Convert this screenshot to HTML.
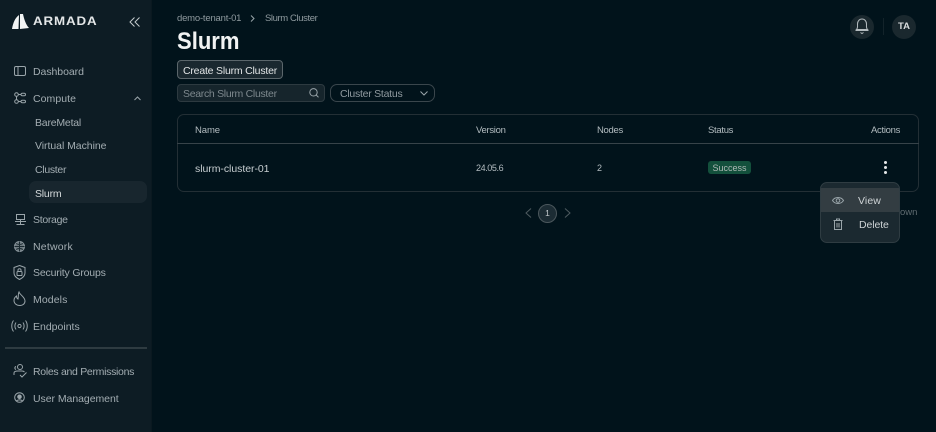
<!DOCTYPE html>
<html><head><meta charset="utf-8"><style>
html,body{margin:0;padding:0;width:936px;height:432px;overflow:hidden;background:#01131b;font-family:"Liberation Sans",sans-serif}
.t{position:absolute;white-space:nowrap;line-height:14px;font-size:10.5px;color:#a3adb2}
svg{position:absolute;fill:none;stroke:#9aa5aa;stroke-width:1;overflow:visible}
.b{position:absolute;box-sizing:border-box}
</style></head><body>
<div class="b" style="left:0;top:0;width:152px;height:432px;background:#0d1c24;border-right:1px solid #0a1920"></div>
<svg style="left:11px;top:13px" width="20" height="18"><path d="M1 16C2 10 4 5 8 2L7.500 16ZM9 1H12C13 6 15 12 18 15L9 16Z" fill="#f2f4f4" stroke="none"/></svg>
<div class="t" style="left:33px;top:15px;font-size:11.500px;font-weight:700;color:#e4e7e8;letter-spacing:.75px;transform:scaleX(1.16);transform-origin:left">ARMADA</div>
<svg style="left:129px;top:17px" width="12" height="10"><path d="M5.500 .5L1 5L5.500 9.500M10.500 .5L6 5L10.500 9.500" stroke="#c4cacc"/></svg>

<svg style="left:14px;top:66px" width="12" height="11"><rect x=".5" y=".5" width="11" height="9" rx="1.500"/><path d="M4 .5V9.500"/></svg>
<div class="t" style="left:33px;top:65px;letter-spacing:-.05px">Dashboard</div>
<svg style="left:14px;top:92px" width="12" height="12"><circle cx="2.500" cy="2.500" r="1.800"/><circle cx="2.500" cy="9.500" r="1.800"/><rect x="7" y="1.200" width="4.500" height="2.600" rx="1.300"/><rect x="7" y="8.200" width="4.500" height="2.600" rx="1.300"/><path d="M4.500 2.500H7M4.500 9.500H7M2.500 4.500V7.500"/></svg>
<div class="t" style="left:33px;top:92px;letter-spacing:.05px">Compute</div>
<svg style="left:134px;top:96px" width="7" height="5"><path d="M.5 4L3.500 1L6.500 4"/></svg>
<div class="t" style="left:35px;top:116px;letter-spacing:-.2px">BareMetal</div>
<div class="t" style="left:35px;top:139px;letter-spacing:-.05px">Virtual Machine</div>
<div class="t" style="left:35px;top:163px;letter-spacing:-.3px">Cluster</div>
<div class="b" style="left:29px;top:181px;width:118px;height:22px;border-radius:7px;background:#18262e"></div>
<div class="t" style="left:35px;top:187px;color:#d5dadc;letter-spacing:-.2px">Slurm</div>
<svg style="left:15px;top:214px" width="11" height="12"><rect x="1.500" y=".5" width="8" height="5"/><path d="M0 7.500H11M1.500 10.500H9.500M5.500 5.500V10.500"/></svg>
<div class="t" style="left:33px;top:213px;letter-spacing:-.3px">Storage</div>
<svg style="left:14px;top:241px" width="11" height="11"><circle cx="5.500" cy="5.500" r="5" fill="#6f7b81" stroke="#87939a"/><path d="M.5 5.500H10.500M5.500 .5V10.500M2 2.500Q5.500 4.500 9 2.500M2 8.500Q5.500 6.500 9 8.500" stroke="#1a2a31"/></svg>
<div class="t" style="left:33px;top:240px;letter-spacing:.2px">Network</div>
<svg style="left:13px;top:265px" width="13" height="15"><path d="M6.500 .5L12 2.500V8C12 11 9.500 13 6.500 14.500C3.500 13 1 11 1 8V2.500Z"/><rect x="4" y="6.500" width="5" height="4" rx=".8"/><path d="M5 6.500V5C5 3.300 8 3.300 8 5V6.500"/></svg>
<div class="t" style="left:33px;top:266px;letter-spacing:-.17px">Security Groups</div>
<svg style="left:13px;top:291px" width="13" height="15"><path d="M6 1C7 4 12 6 12 10C12 13 9.500 14.500 7 14.500C3.500 14.500 1 12.500 1 9.500C1 7.500 2 6 3.500 5C3.500 6.500 4 7.500 5 8C5.500 5.500 5 3 6 1Z"/></svg>
<div class="t" style="left:33px;top:293px;letter-spacing:.1px">Models</div>
<svg style="left:11px;top:320px" width="17" height="12"><circle cx="8.500" cy="6" r="1.600"/><path d="M5 2.500C3.500 4.500 3.500 7.500 5 9.500M12 2.500C13.500 4.500 13.500 7.500 12 9.500M2.500 .5C.2 3.500 .2 8.500 2.500 11.500M14.500 .5C16.800 3.500 16.800 8.500 14.500 11.500"/></svg>
<div class="t" style="left:33px;top:320px;letter-spacing:0">Endpoints</div>
<div class="b" style="left:5px;top:347px;width:142px;height:2px;background:#2e3b41"></div>
<svg style="left:13px;top:364px" width="14" height="14"><circle cx="7" cy="3" r="2.500"/><path d="M3 2.500C1.500 3 1.500 5 3 5.500M1 11V9C1 7.500 3 7 5 7H9C10 7 11 7.500 11.500 8M7 11L9 13L13.500 8.500"/></svg>
<div class="t" style="left:33px;top:365px;letter-spacing:-.3px">Roles and Permissions</div>
<svg style="left:14px;top:392px" width="11" height="11"><circle cx="5.500" cy="5.500" r="4.800"/><circle cx="5.500" cy="4.800" r="1.800" fill="#9aa5aa"/><path d="M2.500 9C3.500 7.500 7.500 7.500 8.500 9"/></svg>
<div class="t" style="left:33px;top:392px;letter-spacing:-.05px">User Management</div>

<div class="t" style="left:177px;top:12px;font-size:9.500px;color:#8f9a9f;letter-spacing:-.2px">demo-tenant-01</div>
<svg style="left:250px;top:15px" width="5" height="7"><path d="M1 .5L4 3.500L1 6.500"/></svg>
<div class="t" style="left:265px;top:12px;font-size:9.500px;color:#8f9a9f;letter-spacing:-.4px">Slurm Cluster</div>
<div class="t" style="left:177px;top:30px;font-size:24.500px;line-height:24px;font-weight:700;color:#f1f3f3;transform:scaleX(.9);transform-origin:left">Slurm</div>
<div class="b" style="left:177px;top:60px;width:106px;height:19px;border:1px solid #5b666b;border-radius:4px;background:#1a282f"></div>
<div class="t" style="left:183px;top:64px;color:#e2e5e6;letter-spacing:-.2px">Create Slurm Cluster</div>
<div class="b" style="left:177px;top:84px;width:148px;height:18px;border:1px solid #2d3a40;border-radius:4px;background:#16252c"></div>
<div class="t" style="left:183px;top:87px;color:#7d888d;letter-spacing:-.3px">Search Slurm Cluster</div>
<svg style="left:309px;top:88px" width="11" height="10"><circle cx="4.500" cy="4.300" r="3.700"/><path d="M7.200 7L9.500 9.300"/></svg>
<div class="b" style="left:330px;top:84px;width:105px;height:18px;border:1px solid #3a464c;border-radius:7px"></div>
<div class="t" style="left:340px;top:87px;color:#8f9a9f;letter-spacing:-.25px">Cluster Status</div>
<svg style="left:420px;top:91px" width="8" height="5"><path d="M.5 .5L4 4L7.500 .5"/></svg>

<div class="b" style="left:850px;top:15px;width:24px;height:24px;border-radius:50%;background:#1a282e"></div>
<svg style="left:855px;top:18px" width="14" height="17"><path d="M1.500 11.500C3 10 2.500 8 2.500 6C2.500 3 4.500 1 7 1C9.500 1 11.500 3 11.500 6C11.500 8 11 10 12.500 11.500ZM.5 12.500H13.500" stroke="#b4bcbf"/><path d="M5.500 14.500L7 15.500L8.500 14.500" stroke="#b4bcbf"/></svg>
<div class="b" style="left:883px;top:18px;width:1px;height:17px;background:#13232a"></div>
<div class="b" style="left:892px;top:15px;width:24px;height:24px;border-radius:50%;background:#1a282e"></div>
<div class="t" style="left:892px;top:20px;width:24px;text-align:center;font-size:9.500px;font-weight:700;color:#d8dcdd">TA</div>

<div class="b" style="left:177px;top:114px;width:742px;height:78px;border:1px solid #232f35;border-radius:7px"></div>
<div class="b" style="left:177px;top:143px;width:742px;height:1px;background:#374349"></div>
<div class="t" style="left:195px;top:124px;font-size:9.500px;color:#b3bcc0;letter-spacing:-.1px">Name</div>
<div class="t" style="left:476px;top:124px;font-size:9.500px;color:#b3bcc0;letter-spacing:-.3px">Version</div>
<div class="t" style="left:597px;top:124px;font-size:9.500px;color:#b3bcc0;letter-spacing:-.3px">Nodes</div>
<div class="t" style="left:708px;top:124px;font-size:9.500px;color:#b3bcc0;letter-spacing:-.3px">Status</div>
<div class="t" style="left:871px;top:124px;font-size:9.500px;color:#b3bcc0;letter-spacing:-.3px">Actions</div>
<div class="t" style="left:195px;top:162px;color:#c6cdd0;letter-spacing:-.05px">slurm-cluster-01</div>
<div class="t" style="left:476px;top:161px;font-size:9px;color:#b3bcc0;letter-spacing:-.4px">24.05.6</div>
<div class="t" style="left:597px;top:161px;font-size:9px;color:#b3bcc0">2</div>
<div class="b" style="left:708px;top:161px;width:43px;height:13px;background:#13503c;border-radius:3px"></div>
<div class="t" style="left:708px;top:162px;width:43px;text-align:center;line-height:13px;font-size:9px;color:#aeb9b5">Success</div>
<div class="b" style="left:884px;top:161px;width:3px;height:3px;border-radius:50%;background:#e4e7e8"></div>
<div class="b" style="left:884px;top:166px;width:3px;height:3px;border-radius:50%;background:#e4e7e8"></div>
<div class="b" style="left:884px;top:171px;width:3px;height:3px;border-radius:50%;background:#e4e7e8"></div>

<svg style="left:525px;top:208px" width="7" height="10"><path d="M6 .5L1 5L6 9.500" stroke="#4f5b60"/></svg>
<div class="b" style="left:538px;top:204px;width:19px;height:19px;border-radius:50%;border:1px solid #4b575c;background:#1c2c34"></div>
<div class="t" style="left:538px;top:206px;width:19px;text-align:center;font-size:8.500px;color:#c2c9cc">1</div>
<svg style="left:564px;top:208px" width="7" height="10"><path d="M1 .5L6 5L1 9.500" stroke="#4f5b60"/></svg>
<div class="t" style="left:900px;top:206px;font-size:9.500px;color:#5f6b70">own</div>

<div class="b" style="left:820px;top:182px;width:80px;height:61px;border:1px solid #2f3c42;border-radius:7px;background:#1b2930;overflow:hidden"><div class="b" style="left:0;top:5px;width:80px;height:24px;background:#333d42"></div></div>
<svg style="left:832px;top:196px" width="12" height="9"><path d="M.5 4.500C3 .5 9 .5 11.500 4.500C9 8.500 3 8.500 .5 4.500Z"/><circle cx="6" cy="4.500" r="1.800"/></svg>
<div class="t" style="left:858px;top:194px;color:#ced3d5;letter-spacing:.1px">View</div>
<svg style="left:833px;top:218px" width="10" height="12"><path d="M.5 2.500H9.500M3.500 2.500V1H6.500V2.500M1.500 2.500V11.500H8.500V2.500"/><rect x="3" y="5" width="4" height="4.500" fill="#5d686d" stroke="none"/></svg>
<div class="t" style="left:859px;top:218px;color:#ced3d5;letter-spacing:-.1px">Delete</div>
</body></html>
